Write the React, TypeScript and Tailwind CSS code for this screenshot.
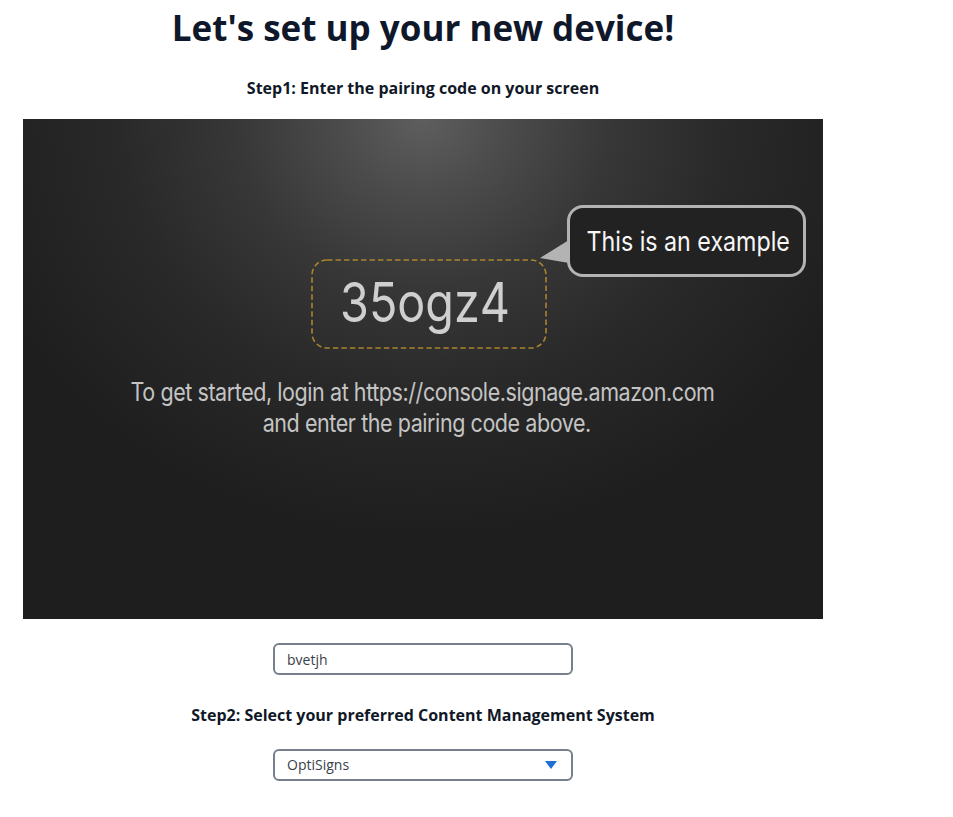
import React from "react";

export default function App() {
  return (
    <div className="min-h-screen bg-white font-['Open_Sans',sans-serif]">
      <div className="w-[846px] flex flex-col items-center">
        <h1 className="mt-2 text-[35px] leading-10 font-bold text-[#0f172a]">
          Let's set up your new device!
        </h1>
        <p className="mt-[28px] text-base leading-6 font-bold text-[#111827]">
          Step1: Enter the pairing code on your screen
        </p>

        <div className="relative mt-[19px] w-[800px] h-[500px] overflow-hidden bg-[radial-gradient(ellipse_470px_420px_at_50%_0%,#5e5e5e_0%,#4b4b4b_18%,#373737_40%,#292929_65%,#1e1e1e_100%)] bg-[#1c1c1c] font-['Inter',sans-serif]">
          <div className="flex flex-col items-center">
            <div className="relative mt-[140px] ml-3 w-[236px] h-[90px] flex items-center justify-center">
              <svg
                className="absolute inset-0"
                width="236"
                height="90"
                viewBox="0 0 236 90"
              >
                <rect
                  x="1"
                  y="1"
                  width="234"
                  height="88"
                  rx="15"
                  fill="none"
                  stroke="#a8842f"
                  strokeWidth="1.6"
                  strokeDasharray="5.5 3"
                />
              </svg>
              <span className="inline-block scale-x-[0.85] text-[55px] leading-none text-[#cfcfcf] -mt-1 mr-2">
                35ogz4
              </span>
            </div>
            <div className="mt-[28px] flex flex-col items-center text-[25px] leading-[31px] text-[#c4c4c4] tracking-[-0.02em]">
              <span className="inline-block scale-x-[0.86] whitespace-nowrap">
                To get started, login at https://console.signage.amazon.com
              </span>
              <span className="inline-block scale-x-[0.86] whitespace-nowrap ml-2">
                and enter the pairing code above.
              </span>
            </div>
          </div>

          <svg
            className="absolute left-[514px] top-[118px]"
            width="34"
            height="30"
            viewBox="0 0 34 30"
          >
            <path d="M3 21 L32 3 L32 26 Z" fill="#b3b3b3" />
          </svg>
          <div className="absolute left-[544px] top-[86px] w-[239px] h-[72px] rounded-[16px] border-[3px] border-[#b3b3b3] bg-[#222222] flex items-center justify-center">
            <span className="inline-block scale-x-[0.86] whitespace-nowrap text-[27px] leading-none text-[#f7f7f7] ml-1">
              This is an example
            </span>
          </div>
        </div>

        <input
          readOnly
          value="bvetjh"
          className="mt-[24px] w-[300px] h-[32px] rounded-md border-2 border-[#787f8c] px-3 text-sm text-[#3a3f4a] outline-none"
        />

        <p className="mt-[28px] text-base leading-6 font-bold text-[#111827]">
          Step2: Select your preferred Content Management System
        </p>

        <div className="mt-[22px] w-[300px] h-[32px] rounded-md border-2 border-[#787f8c] px-3 flex items-center justify-between text-sm text-[#3a3f4a]">
          <span>OptiSigns</span>
          <svg width="12" height="8" viewBox="0 0 12 8" className="mr-[2px]">
            <path d="M0 0 H12 L6 8 Z" fill="#1f6fd6" />
          </svg>
        </div>
      </div>
    </div>
  );
}
